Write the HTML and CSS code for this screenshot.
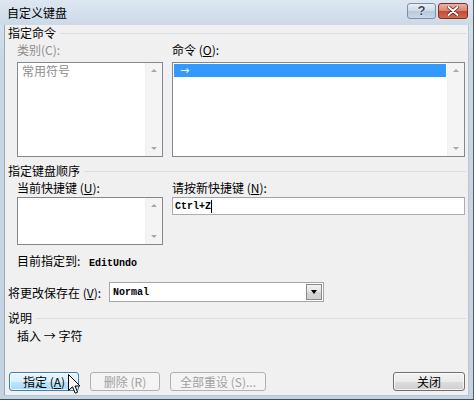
FILE: index.html
```html
<!DOCTYPE html>
<html>
<head>
<meta charset="utf-8">
<link rel="stylesheet" href="styles.css">
</head>
<body>
<div class="window">
  <div class="titlebar">
    <span class="title">自定义键盘</span>
    <div class="tb-buttons">
      <div class="tb-btn help">?</div>
      <div class="tb-btn close">
        <svg width="12" height="10" viewBox="0 0 12 10"><path d="M1.5 1 L10.5 9 M10.5 1 L1.5 9" stroke="#5a1a10" stroke-width="3.4" stroke-linecap="round"/><path d="M1.5 1 L10.5 9 M10.5 1 L1.5 9" stroke="#fff" stroke-width="2" stroke-linecap="round"/></svg>
      </div>
    </div>
  </div>
  <div class="client">
    <div class="group-head head-1"><span>指定命令</span><i class="rule"></i></div>
    <div class="two-col labels-1">
      <div class="lbl disabled">类别(C):</div>
      <div class="lbl">命令 (<u>O</u>):</div>
    </div>
    <div class="two-col lists-1">
      <div class="listbox tall">
        <div class="items"><div class="item disabled">常用符号</div></div>
        <div class="vscroll"><i class="up"></i><i class="down"></i></div>
      </div>
      <div class="listbox tall">
        <div class="items"><div class="item sel">→</div></div>
        <div class="vscroll"><i class="up"></i><i class="down"></i></div>
      </div>
    </div>

    <div class="group-head head-2"><span>指定键盘顺序</span><i class="rule"></i></div>
    <div class="two-col labels-2">
      <div class="lbl">当前快捷键 (<u>U</u>):</div>
      <div class="lbl">请按新快捷键 (<u>N</u>):</div>
    </div>
    <div class="two-col row-2">
      <div class="listbox short">
        <div class="items"></div>
        <div class="vscroll"><i class="up"></i><i class="down"></i></div>
      </div>
      <div class="textbox"><span class="mono">Ctrl+Z</span><i class="caret"></i></div>
    </div>
    <div class="assigned">目前指定到: <span class="mono">EditUndo</span></div>

    <div class="save-row">
      <span class="save-label">将更改保存在 (<u>V</u>):</span>
      <div class="combo"><span class="mono">Normal</span><div class="drop"><i></i></div></div>
    </div>

    <div class="group-head head-3"><span>说明</span><i class="rule"></i></div>
    <div class="desc">插入 → 字符</div>

    <div class="buttons">
      <div class="btn focus">指定 (<u>A</u>)</div>
      <div class="btn disabled">删除 (R)</div>
      <div class="btn disabled wide">全部重设 (S)...</div>
      <div class="btn close-btn">关闭</div>
    </div>
  </div>
  <svg class="cursor" width="13" height="21" viewBox="0 0 13 21"><path d="M0.5 0.5 L0.5 16.5 L4.5 12.8 L7.2 19.2 L9.6 18.2 L7 12 L12 12 Z" fill="#fff" stroke="#000" stroke-width="1" stroke-linejoin="miter"/></svg>
</div>
</body>
</html>
```

FILE: styles.css
```css
* { box-sizing: border-box; }
html, body { margin: 0; padding: 0; }
body {
  font-family: "Noto Sans CJK SC", "Noto Sans", sans-serif;
  font-size: 12px;
  color: #000;
  background: #fff;
}
.window {
  position: relative;
  width: 474px;
  height: 400px;
  display: flex;
  flex-direction: column;
  background: linear-gradient(#dbe5ef, #c9d7e5 60px, #c4d3e2);
  border-right: 1px solid #4d5d6c;
  border-bottom: 1px solid #3d5260;
}
.titlebar {
  height: 25px;
  flex: none;
  display: flex;
  align-items: center;
  padding-left: 7px;
  background: linear-gradient(#dde7f1, #cbd9e8);
}
.title { line-height: 14px; color: #000; }
.tb-buttons {
  margin-left: auto;
  margin-right: 5px;
  margin-top: -3px;
  display: flex;
  gap: 2px;
}
.tb-btn {
  height: 16px;
  border-radius: 3px;
  display: flex;
  align-items: center;
  justify-content: center;
}
.tb-btn.help {
  width: 29px;
  border: 1px solid #7d8fa5;
  background: linear-gradient(#e7eef6, #cdd9e6 50%, #b7c8db 51%, #c9d8e8);
  font-family: "Liberation Sans", sans-serif;
  font-weight: bold;
  font-size: 13px;
  color: #3b4a5c;
  text-shadow: 0 0 1px #fff, 0 0 2px #fff;
  line-height: 14px;
}
.tb-btn.close {
  width: 30px;
  border: 1px solid #7c2e22;
  background: linear-gradient(#eab3a8, #d9826f 50%, #c74a33 51%, #d06a4e);
}
.client {
  flex: 1;
  margin: 0 4px 3px 4px;
  padding: 0 3px;
  background: #f0f0f0;
  border-left: 1px solid #9aa8b8;
  border-right: 1px solid #b8c6d4;
  border-bottom: 1px solid #b8c6d4;
  display: flex;
  flex-direction: column;
}
.group-head {
  height: 14px;
  line-height: 14px;
  display: flex;
  align-items: center;
}
.group-head .rule {
  flex: 1;
  height: 1px;
  background: #d5dfe5;
  margin-left: 4px;
  margin-right: -1px;
}
.head-1 { margin-top: 1px; }
.head-2 { margin-top: 7px; }
.head-3 { margin-top: 9px; }
.two-col {
  margin-left: 9px;
  display: grid;
  grid-template-columns: 146px 293px;
  column-gap: 9px;
}
.lbl { height: 14px; line-height: 14px; white-space: nowrap; }
.disabled { color: #8d8d8d; }
.labels-1 { margin-top: 3px; }
.lists-1 { margin-top: 5px; }
.labels-2 { margin-top: 3px; }
.row-2 { margin-top: 2px; align-items: start; }
.listbox {
  border: 1px solid #828790;
  background: #fff;
  display: flex;
}
.listbox.tall { height: 95px; }
.listbox.short { height: 48px; }
.items { flex: 1; padding: 1px 1px; }
.item {
  height: 13px;
  line-height: 13px;
  padding-left: 3px;
}
.item.sel {
  background: #3399ff;
  color: #fff;
  padding-left: 6px;
  font-family: "DejaVu Sans", sans-serif;
  font-size: 11px;
}
.vscroll {
  width: 17px;
  flex: none;
  background: #f4f4f4;
  border-left: 1px solid #f0f0f0;
  display: flex;
  flex-direction: column;
  justify-content: space-between;
  align-items: center;
  padding: 6px 0 6px;
}
.vscroll i {
  width: 0;
  height: 0;
  border-left: 3.5px solid transparent;
  border-right: 3.5px solid transparent;
}
.vscroll .up { border-bottom: 3px solid #a6a6a6; }
.vscroll .down { border-top: 3px solid #a6a6a6; }
.textbox {
  height: 18px;
  border: 1px solid #abadb3;
  border-top-color: #9fa4ad;
  background: #fff;
  display: flex;
  align-items: center;
  padding-left: 2px;
}
.mono {
  font-family: "Liberation Mono", "DejaVu Sans Mono", monospace;
  font-size: 10px;
  font-weight: bold;
  letter-spacing: 0;
}
.caret {
  width: 1px;
  height: 13px;
  background: #000;
  margin-left: 0;
}
.assigned {
  margin-top: 9px;
  margin-left: 9px;
  height: 14px;
  line-height: 14px;
}
.assigned .mono { margin-left: 6px; }
.save-row {
  margin-top: 14px;
  height: 20px;
  display: flex;
  align-items: center;
}
.save-label { width: 101px; white-space: nowrap; }
.combo {
  width: 215px;
  height: 20px;
  border: 1px solid #a6a6a6;
  background: #fff;
  display: flex;
  align-items: center;
  padding-left: 3px;
}
.combo .drop {
  margin-left: auto;
  margin-right: 1px;
  width: 16px;
  height: 16px;
  border: 1px solid #8a8a8a;
  background: linear-gradient(#f2f2f2, #e4e4e4 50%, #d4d4d4 51%, #cfcfcf);
  display: flex;
  align-items: center;
  justify-content: center;
}
.combo .drop i {
  width: 0;
  height: 0;
  border-left: 3.5px solid transparent;
  border-right: 3.5px solid transparent;
  border-top: 4px solid #000;
}
.desc {
  margin-top: 4px;
  margin-left: 9px;
  height: 14px;
  line-height: 14px;
}
.buttons {
  margin-top: 29px;
  display: flex;
  height: 19px;
}
.btn {
  height: 19px;
  width: 70px;
  border: 1px solid #707070;
  border-radius: 3px;
  background: linear-gradient(#f2f2f2, #ebebeb 50%, #dddddd 51%, #cfcfcf);
  display: flex;
  align-items: center;
  justify-content: center;
  line-height: 14px;
  white-space: nowrap;
  box-shadow: inset 0 0 0 1px rgba(255,255,255,0.7);
}
.btn:first-child { margin-left: 1px; }
.btn + .btn { margin-left: 11px; }
.btn.wide { width: 96px; margin-left: 10px; }
.btn.focus {
  border-color: #3c7fb1;
  background: linear-gradient(#eaf6fd, #d9f0fc 50%, #bee6fd 51%, #a7d9f5);
}
.btn.disabled {
  border-color: #adb2b5;
  background: #f4f4f4;
  color: #a0a0a0;
  box-shadow: none;
}
.btn.close-btn { margin-left: auto; width: 72px; }
.cursor {
  position: absolute;
  left: 68px;
  top: 374px;
}
```
